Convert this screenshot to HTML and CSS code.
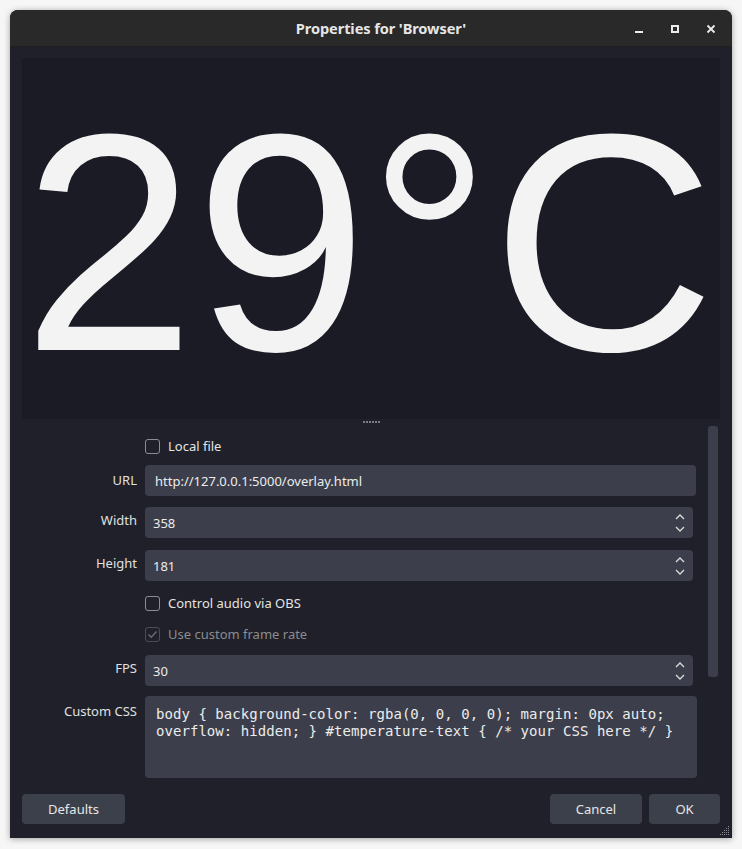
FILE: index.html
```html
<!DOCTYPE html>
<html>
<head>
<meta charset="utf-8">
<link rel="stylesheet" href="styles.css">
</head>
<body>
<div class="window">
  <div class="titlebar">
    <span class="title">Properties for 'Browser'</span>
    <div class="controls">
      <svg class="ctl" width="10" height="10" viewBox="0 0 10 10"><rect x="1" y="7" width="8" height="2" fill="#ececec"/></svg>
      <svg class="ctl" width="10" height="10" viewBox="0 0 10 10"><rect x="2" y="2" width="6" height="6" fill="none" stroke="#ececec" stroke-width="2"/></svg>
      <svg class="ctl" width="10" height="10" viewBox="0 0 10 10"><path d="M1.5 1.5L8.5 8.5M8.5 1.5L1.5 8.5" stroke="#ececec" stroke-width="1.8"/></svg>
    </div>
  </div>
  <div class="content">
    <div class="preview"><div class="temp">29°C</div></div>
    <div class="splitter"><i></i><i></i><i></i><i></i><i></i><i></i></div>
    <div class="form-area">
      <div class="form">
        <div class="label"></div>
        <label class="check"><span class="box"></span><span>Local file</span></label>

        <div class="label">URL</div>
        <div class="field">http://127.0.0.1:5000/overlay.html</div>

        <div class="label label-spin">Width</div>
        <div class="field spin"><span>358</span>
          <span class="arrows">
            <svg width="10" height="6" viewBox="0 0 10 6"><polyline points="1,5 5,1 9,5" fill="none" stroke="#dcdcdc" stroke-width="1.3"/></svg>
            <svg width="10" height="6" viewBox="0 0 10 6"><polyline points="1,1 5,5 9,1" fill="none" stroke="#dcdcdc" stroke-width="1.3"/></svg>
          </span>
        </div>

        <div class="label label-spin">Height</div>
        <div class="field spin"><span>181</span>
          <span class="arrows">
            <svg width="10" height="6" viewBox="0 0 10 6"><polyline points="1,5 5,1 9,5" fill="none" stroke="#dcdcdc" stroke-width="1.3"/></svg>
            <svg width="10" height="6" viewBox="0 0 10 6"><polyline points="1,1 5,5 9,1" fill="none" stroke="#dcdcdc" stroke-width="1.3"/></svg>
          </span>
        </div>

        <div class="label"></div>
        <label class="check"><span class="box"></span><span>Control audio via OBS</span></label>

        <div class="label"></div>
        <label class="check disabled"><span class="box"><svg width="13" height="13" viewBox="0 0 13 13"><polyline points="2.5,6.5 5.2,9.2 10.5,3.5" fill="none" stroke="#6a6c74" stroke-width="1.4"/></svg></span><span>Use custom frame rate</span></label>

        <div class="label label-spin">FPS</div>
        <div class="field spin"><span>30</span>
          <span class="arrows">
            <svg width="10" height="6" viewBox="0 0 10 6"><polyline points="1,5 5,1 9,5" fill="none" stroke="#dcdcdc" stroke-width="1.3"/></svg>
            <svg width="10" height="6" viewBox="0 0 10 6"><polyline points="1,1 5,5 9,1" fill="none" stroke="#dcdcdc" stroke-width="1.3"/></svg>
          </span>
        </div>

        <div class="label label-top">Custom CSS</div>
        <div class="textarea">body { background-color: rgba(0, 0, 0, 0); margin: 0px auto;
overflow: hidden; } #temperature-text { /* your CSS here */ }</div>
      </div>
      <div class="scroll-track"><div class="scroll-thumb"></div></div>
    </div>
    <div class="buttons">
      <button class="btn btn-defaults">Defaults</button>
      <div class="spacer"></div>
      <button class="btn btn-cancel">Cancel</button>
      <button class="btn btn-ok">OK</button>
    </div>
  </div>
  <svg class="grip" width="10" height="10" viewBox="0 0 10 10" fill="#8a8c94">
    <rect x="8" y="0" width="1" height="1"/>
    <rect x="6" y="2" width="1" height="1"/><rect x="8" y="2" width="1" height="1"/>
    <rect x="4" y="4" width="1" height="1"/><rect x="6" y="4" width="1" height="1"/><rect x="8" y="4" width="1" height="1"/>
    <rect x="2" y="6" width="1" height="1"/><rect x="4" y="6" width="1" height="1"/><rect x="6" y="6" width="1" height="1"/><rect x="8" y="6" width="1" height="1"/>
    <rect x="0" y="8" width="1" height="1"/><rect x="2" y="8" width="1" height="1"/><rect x="4" y="8" width="1" height="1"/><rect x="6" y="8" width="1" height="1"/><rect x="8" y="8" width="1" height="1"/>
  </svg>
</div>
</body>
</html>
```

FILE: styles.css
```css
html, body {
  margin: 0;
  padding: 0;
}
body {
  background: #f6f6f6;
  padding: 10px 10px 11px 10px;
  font-family: "Noto Sans", "Open Sans", sans-serif;
  font-size: 13px;
  color: #e2e2e2;
}
.window {
  position: relative;
  width: 722px;
  height: 828px;
  background: #1f2029;
  border-radius: 8px 8px 0 0;
  box-shadow: 0 1px 6px rgba(0,0,0,0.35);
  overflow: hidden;
  display: flex;
  flex-direction: column;
}
.titlebar {
  height: 37px;
  background: #292929;
  border-bottom: 1px solid #202020;
  box-sizing: border-box;
  display: flex;
  align-items: center;
  justify-content: center;
  position: relative;
  flex: none;
}
.title {
  font-family: "Noto Sans", sans-serif;
  font-weight: 700;
  font-size: 14.6px;
  color: #e6e6e6;
  letter-spacing: -0.1px;
  padding-left: 20px;
}
.controls {
  position: absolute;
  right: 16px;
  top: 14px;
  display: flex;
  gap: 26px;
}
.ctl {
  display: block;
}
.content {
  padding: 11px 12px 0 12px;
  display: flex;
  flex-direction: column;
  flex: 1;
}
.preview {
  height: 361px;
  background: #1a1b25;
  overflow: hidden;
  flex: none;
}
.temp {
  font-family: "Liberation Sans", Arial, sans-serif;
  font-size: 310px;
  line-height: 310px;
  color: #f3f3f3;
  text-align: center;
  padding-top: 30px;
  padding-right: 4px;
  white-space: nowrap;
}
.splitter {
  height: 6px;
  display: flex;
  justify-content: center;
  gap: 1px;
  padding-top: 2px;
  box-sizing: border-box;
  flex: none;
}
.splitter i {
  display: block;
  width: 2px;
  height: 2px;
  background: #7a7c84;
}
.form-area {
  height: 359px;
  display: flex;
  flex: none;
}
.form {
  flex: 1;
  display: grid;
  grid-template-columns: 115px 551px;
  grid-template-rows: 30px 42px 43px 42px 31px 32px 41px 82px;
  column-gap: 8px;
  padding-top: 10px;
  align-content: start;
}
.label {
  text-align: right;
  height: 31px;
  line-height: 31px;
  color: #e0e0e0;
}
.label-spin {
  line-height: 27px;
}
.label-top {
  line-height: 18px;
  padding-top: 6px;
}
.check {
  display: flex;
  align-items: center;
  gap: 8px;
  height: 22px;
  color: #e4e4e4;
}
.box {
  width: 15px;
  height: 15px;
  box-sizing: border-box;
  border: 1px solid #8b8d95;
  border-radius: 3px;
  display: flex;
  align-items: center;
  justify-content: center;
}
.check.disabled {
  color: #8b8c90;
}
.check.disabled .box {
  border-color: #4b4d55;
}
.field {
  height: 31px;
  background: #3c3f4b;
  border-radius: 4px;
  display: flex;
  align-items: center;
  padding-left: 10px;
  box-sizing: border-box;
  color: #ececec;
}
.spin {
  margin-right: 3px;
  padding-left: 8px;
  justify-content: space-between;
  padding-right: 8px;
}
.arrows {
  display: flex;
  flex-direction: column;
  gap: 6px;
}
.arrows svg {
  display: block;
}
.textarea {
  height: 82px;
  background: #3c3f4b;
  border-radius: 4px;
  box-sizing: border-box;
  padding: 10px 11px 8px 11px;
  font-family: "DejaVu Sans Mono", "Liberation Mono", monospace;
  font-size: 14px;
  line-height: 17px;
  white-space: pre;
  color: #ececec;
  margin-right: -1px;
  letter-spacing: 0.05px;
}
.scroll-track {
  width: 10px;
  margin-left: 12px;
  margin-right: 2px;
  padding-top: 1px;
}
.scroll-thumb {
  width: 10px;
  height: 251px;
  background: #3c3f4b;
  border-radius: 3px;
}
.buttons {
  display: flex;
  gap: 7px;
  margin-top: 10px;
  flex: none;
}
.spacer {
  flex: 1;
}
.btn {
  height: 30px;
  background: #3c404b;
  border: none;
  border-radius: 4px;
  color: #e6e6e6;
  font-family: "Noto Sans", sans-serif;
  font-size: 13px;
  padding: 0;
}
.btn-defaults { width: 103px; }
.btn-cancel { width: 92px; }
.btn-ok { width: 71px; }
.grip {
  position: absolute;
  right: 2px;
  bottom: 2px;
}
```
